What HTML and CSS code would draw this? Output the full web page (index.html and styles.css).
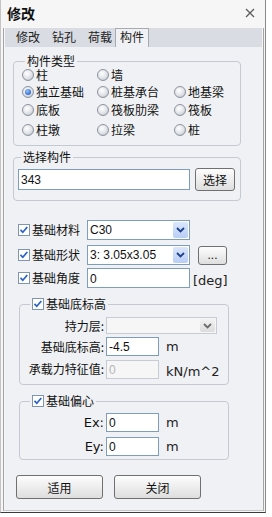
FILE: index.html
```html
<!DOCTYPE html>
<html lang="zh">
<head>
  <meta charset="UTF-8">
  <title>修改</title>
  <link rel="stylesheet" href="styles.css">
</head>
<body>
  <div class="window">
    <!-- Title Bar -->
    <div class="titlebar">
      <span class="title">修改</span>
      <svg class="close" width="10" height="10" viewBox="0 0 10 10"><path d="M1 1 L9 9 M9 1 L1 9" stroke="#5a5a5a" stroke-width="1.2" fill="none"/></svg>
    </div>

    <div class="frame">
      <!-- Tabs -->
      <div class="tabs">
        <span class="tab">修改</span>
        <span class="tab">钻孔</span>
        <span class="tab">荷载</span>
        <span class="tab active">构件</span>
      </div>

      <div class="panel">
        <!-- Member type -->
        <fieldset class="group type-group">
          <legend>构件类型</legend>
          <div class="radio-grid">
            <label class="radio"><span class="dot"></span>柱</label>
            <label class="radio"><span class="dot"></span>墙</label>
            <span></span>
            <label class="radio on"><span class="dot"></span>独立基础</label>
            <label class="radio"><span class="dot"></span>桩基承台</label>
            <label class="radio"><span class="dot"></span>地基梁</label>
            <label class="radio"><span class="dot"></span>底板</label>
            <label class="radio"><span class="dot"></span>筏板肋梁</label>
            <label class="radio"><span class="dot"></span>筏板</label>
            <label class="radio"><span class="dot"></span>柱墩</label>
            <label class="radio"><span class="dot"></span>拉梁</label>
            <label class="radio"><span class="dot"></span>桩</label>
          </div>
        </fieldset>

        <!-- Pick member -->
        <fieldset class="group pick-group">
          <legend>选择构件</legend>
          <div class="pick-row">
            <div class="input pick-input">343</div>
            <button class="btn pick-btn">选择</button>
          </div>
        </fieldset>

        <!-- Foundation properties -->
        <div class="field-row row-material">
          <svg class="check" width="12" height="12" viewBox="0 0 12 12"><rect x="0.5" y="0.5" width="11" height="11" fill="#fff" stroke="#8096b0"/><path d="M2.5 5.8 L4.8 8.3 L9.3 3" stroke="#2a62c9" stroke-width="1.7" fill="none"/></svg>
          <span class="check-label">基础材料</span>
          <div class="combo"><span class="combo-text">C30</span><span class="arrow"><svg width="9" height="6" viewBox="0 0 9 6"><path d="M1 1 L4.5 4.5 L8 1" stroke="#1d3f8a" stroke-width="1.8" fill="none"/></svg></span></div>
        </div>
        <div class="field-row row-shape">
          <svg class="check" width="12" height="12" viewBox="0 0 12 12"><rect x="0.5" y="0.5" width="11" height="11" fill="#fff" stroke="#8096b0"/><path d="M2.5 5.8 L4.8 8.3 L9.3 3" stroke="#2a62c9" stroke-width="1.7" fill="none"/></svg>
          <span class="check-label">基础形状</span>
          <div class="combo"><span class="combo-text">3: 3.05x3.05</span><span class="arrow"><svg width="9" height="6" viewBox="0 0 9 6"><path d="M1 1 L4.5 4.5 L8 1" stroke="#1d3f8a" stroke-width="1.8" fill="none"/></svg></span></div>
          <button class="btn dots-btn">...</button>
        </div>
        <div class="field-row row-angle">
          <svg class="check" width="12" height="12" viewBox="0 0 12 12"><rect x="0.5" y="0.5" width="11" height="11" fill="#fff" stroke="#8096b0"/><path d="M2.5 5.8 L4.8 8.3 L9.3 3" stroke="#2a62c9" stroke-width="1.7" fill="none"/></svg>
          <span class="check-label">基础角度</span>
          <div class="input angle-input">0</div>
          <span class="unit">[deg]</span>
        </div>

        <!-- Bottom elevation -->
        <fieldset class="group sub-group level-group">
          <legend>
            <svg class="check" width="12" height="12" viewBox="0 0 12 12"><rect x="0.5" y="0.5" width="11" height="11" fill="#fff" stroke="#8096b0"/><path d="M2.5 5.8 L4.8 8.3 L9.3 3" stroke="#2a62c9" stroke-width="1.7" fill="none"/></svg>
            <span>基础底标高</span>
          </legend>
          <div class="form-grid">
            <span class="label">持力层:</span>
            <div class="combo layer-combo disabled"><span class="combo-text"></span><span class="arrow"><svg width="9" height="6" viewBox="0 0 9 6"><path d="M1 1 L4.5 4.5 L8 1" stroke="#6d6d6d" stroke-width="1.8" fill="none"/></svg></span></div>
            <span class="label">基础底标高:</span>
            <div class="input small-input">-4.5</div>
            <span class="unit">m</span>
            <span class="label">承载力特征值:</span>
            <div class="input small-input disabled">0</div>
            <span class="unit unit-low">kN/m^2</span>
          </div>
        </fieldset>

        <!-- Eccentricity -->
        <fieldset class="group sub-group offset-group">
          <legend>
            <svg class="check" width="12" height="12" viewBox="0 0 12 12"><rect x="0.5" y="0.5" width="11" height="11" fill="#fff" stroke="#8096b0"/><path d="M2.5 5.8 L4.8 8.3 L9.3 3" stroke="#2a62c9" stroke-width="1.7" fill="none"/></svg>
            <span>基础偏心</span>
          </legend>
          <div class="form-grid">
            <span class="label latin">Ex:</span>
            <div class="input small-input">0</div>
            <span class="unit">m</span>
            <span class="label latin">Ey:</span>
            <div class="input small-input">0</div>
            <span class="unit">m</span>
          </div>
        </fieldset>

        <!-- Actions -->
        <div class="actions">
          <button class="btn action-btn">适用</button>
          <button class="btn action-btn">关闭</button>
        </div>
      </div>
    </div>
  </div>
</body>
</html>
```

FILE: styles.css
```css
/* Global */
* {
  box-sizing: border-box;
  margin: 0;
  padding: 0;
}
body {
  background: #fff;
  font-family: "Noto Sans CJK SC", "Liberation Sans", sans-serif;
  font-size: 12px;
  line-height: 14px;
  color: #111;
}
/* Window frame */
.window {
  width: 266px;
  height: 513px;
  display: flex;
  flex-direction: column;
  background: #f6f6f6;
  border-left: 1px solid #c4c4c4;
  border-right: 1px solid #8a8a8a;
  border-bottom: 1px solid #3a3a3a;
}
.titlebar {
  height: 27px;
  display: flex;
  justify-content: space-between;
  align-items: center;
  padding: 0 10px 1px 6px;
}
.title {
  font-size: 14px;
  font-weight: bold;
}
.frame {
  flex: 1;
  display: flex;
  flex-direction: column;
  margin: 1px 1px 1px 2px;
  padding: 0 1px;
  border-left: 1px solid #a3a3a3;
  border-right: 1px solid #a3a3a3;
  border-bottom: 1px solid #c8c8c8;
}
/* Tabs */
.tabs {
  height: 19px;
  display: flex;
  align-items: flex-end;
  background: #d9dce2;
  padding-left: 5px;
}
.tab {
  height: 18px;
  padding: 1px 6px 0;
  color: #222;
}
.tab.active {
  margin-left: -3px;
  padding: 1px 4px 0;
  height: 19px;
  background: #f0f1f4;
  border: 1px solid #a6abb3;
  border-bottom: none;
}
.panel {
  flex: 1;
  background: #f0f1f4;
  padding: 8px 0 0 8px;
}
/* Group boxes */
.group {
  width: 228px;
  border: 1px solid #c5c9d1;
  border-radius: 4px;
  padding: 0 0 0 8px;
  min-width: 0;
}
.group legend {
  margin-left: 3px;
  padding: 0 2px;
  line-height: 12px;
}
.radio-grid {
  display: grid;
  grid-template-columns: 75px 77px auto;
  grid-template-rows: 16px 17px 20px 20px;
  padding-bottom: 5px;
  line-height: 12px;
}
.radio {
  display: flex;
  align-items: center;
  gap: 2px;
}
.dot {
  width: 12px;
  height: 12px;
  border-radius: 50%;
  border: 1px solid #8e949e;
  background: radial-gradient(circle at 40% 35%, #ffffff 0%, #dfe2e7 55%, #aeb3bc 100%);
  display: flex;
  align-items: center;
  justify-content: center;
}
.radio.on .dot::after {
  content: "";
  width: 6px;
  height: 6px;
  border-radius: 50%;
  background: radial-gradient(circle at 40% 35%, #9cc4ff 0%, #2d6bd0 70%);
}
.pick-group {
  margin-top: 5px;
  padding-left: 4px;
}
.pick-row {
  display: flex;
  align-items: center;
  gap: 5px;
  padding: 5px 0 9px;
}
/* Inputs */
.input {
  height: 21px;
  background: #fff;
  border: 1px solid #7f9db9;
  padding: 2px 2px 0;
  font-family: "Liberation Sans", sans-serif;
  font-size: 12px;
  line-height: 16px;
}
.input.disabled {
  background: #f6f6f6;
  border-color: #c5ccd6;
  color: #b5b5b5;
}
.pick-input {
  width: 172px;
}
.btn {
  font-family: "Noto Sans CJK SC", sans-serif;
  font-size: 12px;
  color: #111;
  background: linear-gradient(#fdfdfd, #ececec 55%, #dedede);
  border: 1px solid #707070;
  border-radius: 3px;
}
.pick-btn {
  width: 40px;
  height: 23px;
}
/* Checkbox rows */
.field-row {
  display: flex;
  align-items: center;
  height: 20px;
  padding-left: 5px;
}
.row-material {
  margin-top: 19px;
}
.row-shape {
  margin-top: 5px;
}
.row-angle {
  margin-top: 3px;
}
.check {
  flex: none;
  display: block;
}
.check-label {
  width: 57px;
  padding-left: 2px;
}
.combo {
  width: 103px;
  height: 20px;
  display: flex;
  align-items: center;
  background: #fff;
  border: 1px solid #7f9db9;
  padding-left: 2px;
}
.combo-text {
  flex: 1;
  font-family: "Liberation Sans", sans-serif;
  font-size: 12px;
}
.arrow {
  width: 15px;
  height: 16px;
  margin-right: 1px;
  display: flex;
  align-items: center;
  justify-content: center;
  background: linear-gradient(#dbe6fb, #b9cef5);
  border-radius: 2px;
}
.combo.disabled {
  border-color: #c5ccd6;
  background: #f6f6f6;
}
.combo.disabled .arrow {
  background: linear-gradient(#f2f2f2, #dcdcdc);
}
.dots-btn {
  width: 29px;
  height: 19px;
  margin-left: 8px;
  font-family: "Liberation Sans", sans-serif;
  line-height: 12px;
}
.angle-input {
  width: 103px;
  height: 20px;
}
.unit {
  margin-left: 7px;
  font-family: "DejaVu Sans", sans-serif;
  font-size: 13px;
  color: #222;
}
.row-angle .unit {
  margin-left: 3px;
  margin-top: 6px;
}
/* Sub groups */
.sub-group {
  width: 210px;
  margin: 9px 0 0 6px;
  padding: 0;
}
.sub-group legend {
  display: flex;
  align-items: center;
  gap: 2px;
  margin-left: 10px;
  line-height: 14px;
}
.form-grid {
  display: grid;
  grid-template-columns: 86px 53px 1fr;
  align-items: center;
  row-gap: 3px;
  padding: 6px 0 5px;
}
.label {
  text-align: right;
  padding-right: 2px;
}
.label.latin {
  font-family: "DejaVu Sans", sans-serif;
  font-size: 13px;
}
.layer-combo {
  grid-column: span 2;
  width: 111px;
  height: 17px;
}
.layer-combo .arrow {
  height: 13px;
}
.small-input {
  width: 53px;
  height: 19px;
  line-height: 15px;
}
.unit-low {
  margin-top: 6px;
}
.level-group .form-grid {
  row-gap: 3px;
}
.offset-group {
  margin-top: 9px;
}
.offset-group .form-grid {
  row-gap: 5px;
  padding: 5px 0 3px;
}
/* Actions */
.actions {
  display: flex;
  gap: 11px;
  margin: 15px 0 0 3px;
}
.action-btn {
  width: 87px;
  height: 24px;
}
```
